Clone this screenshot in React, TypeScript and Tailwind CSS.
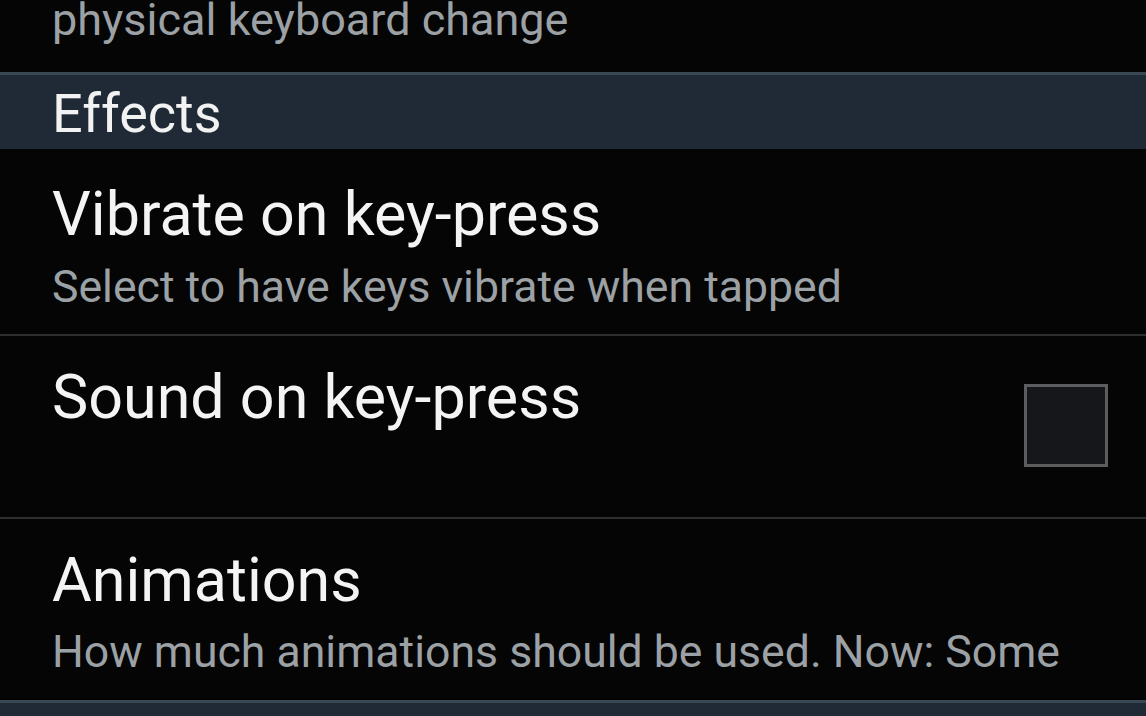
import React from 'react';

const font = { fontFamily: 'Roboto, "Noto Sans", sans-serif' };

function Row({
  title,
  summary,
  checkbox,
  h,
  pt,
  gap,
  last,
}: {
  title: string;
  summary?: string;
  checkbox?: boolean;
  h: string;
  pt: string;
  gap?: string;
  last?: boolean;
}) {
  return (
    <div className={`flex items-start justify-between pl-[52px] pr-[38px] ${h} ${last ? '' : 'border-b-2 border-[#2e2f31]'}`}>
      <div className={pt}>
        <div className="whitespace-nowrap text-[61px] leading-[70px] text-[#f4f4f4]">{title}</div>
        {summary && <div className={`whitespace-nowrap text-[44.6px] leading-[52px] text-[#9ca1a5] ${gap}`}>{summary}</div>}
      </div>
      {checkbox && <div className="mt-[48px] h-[83px] w-[84px] border-[3px] border-[#5c5d5f] bg-[#15171a]" />}
    </div>
  );
}

export default function App() {
  return (
    <div className="flex h-[716px] w-[1146px] flex-col overflow-hidden bg-[#050505]" style={font}>
      {/* previous item tail */}
      <div className="flex h-[72px] shrink-0 flex-col pl-[52px]">
        <div className="-mt-[3px] text-[45px] leading-[45px] text-[#9ca1a5]">physical keyboard change</div>
      </div>

      {/* Effects header */}
      <div className="h-[77px] shrink-0 border-t-[3px] border-[#3a4754] bg-[#1f2a36] pl-[52px]">
        <div className="pt-[8px] text-[54px] leading-[62px] text-[#f2f2f2]">Effects</div>
      </div>

      <Row h="h-[187px] shrink-0" pt="pt-[30px]" gap="mt-[12px]" title="Vibrate on key-press" summary="Select to have keys vibrate when tapped" />
      <Row h="h-[183px] shrink-0" pt="pt-[26px]" title="Sound on key-press" checkbox />
      <Row h="h-[181px] shrink-0" pt="pt-[26px]" gap="mt-[11px]" title="Animations" summary="How much animations should be used. Now: Some" last />

      {/* next header */}
      <div className="h-[16px] shrink-0 border-t-[3px] border-[#3a4754] bg-[#1f2a36]" />
    </div>
  );
}
